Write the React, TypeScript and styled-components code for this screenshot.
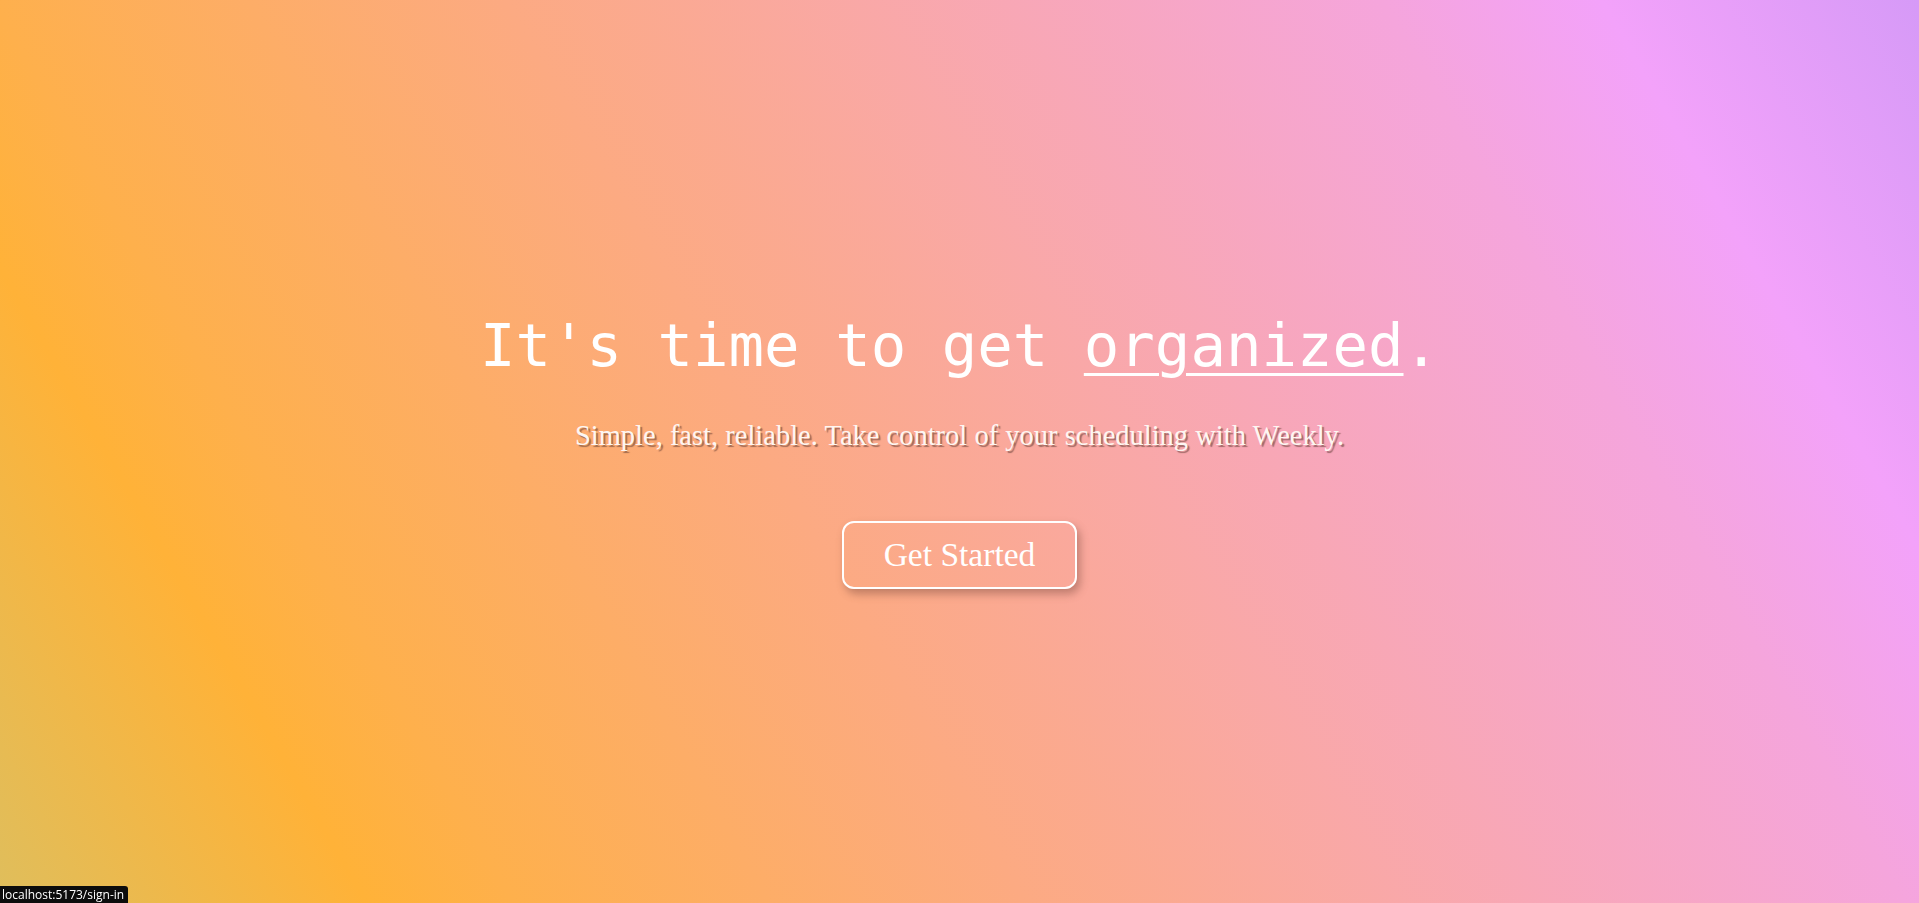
import React from "react";
import styled, { createGlobalStyle } from "styled-components";

const GlobalStyle = createGlobalStyle`
  html, body, #root {
    margin: 0;
    padding: 0;
    height: 100%;
  }
  body {
    overflow: hidden;
  }
`;

const Page = styled.main`
  width: 100vw;
  height: 100vh;
  box-sizing: border-box;
  padding-bottom: 3px;
  display: flex;
  flex-direction: column;
  align-items: center;
  justify-content: center;
  background: linear-gradient(
    60deg,
    #dfbe5c 0%,
    #ffb238 15%,
    #feb04c 21%,
    #fcaa82 42%,
    #f5a5dc 78%,
    #f3a2fa 87%,
    #d69af7 100%
  );
  color: #fff;
`;

const Title = styled.h1`
  margin: 0;
  font-family: "DejaVu Sans Mono", monospace;
  font-weight: 400;
  font-size: 59px;
  line-height: normal;
  white-space: nowrap;
`;

const Underlined = styled.span`
  text-decoration: underline;
  text-decoration-thickness: 3px;
  text-underline-offset: 7px;
`;

const Subtitle = styled.p`
  margin: 40px 0 0;
  font-family: "Liberation Serif", serif;
  font-size: 28.5px;
  line-height: normal;
  color: #fdf6f2;
  text-shadow: 2px 2px 1px rgba(90, 55, 45, 0.55);
`;

const StartButton = styled.button`
  margin-top: 69px;
  width: 235px;
  height: 68px;
  box-sizing: border-box;
  border: 2px solid #fff;
  border-radius: 12px;
  background: transparent;
  color: #fff;
  font-family: "Liberation Serif", serif;
  font-size: 33.5px;
  cursor: pointer;
  box-shadow: 3px 5px 8px rgba(120, 70, 60, 0.45);
`;

const StatusTip = styled.div`
  position: fixed;
  left: 0;
  bottom: 0;
  padding: 0 4px 0 2px;
  height: 17px;
  line-height: 17px;
  background: #0c0c0c;
  color: #fff;
  font-family: "Open Sans", "DejaVu Sans", sans-serif;
  font-size: 12px;
  border-top-right-radius: 3px;
`;

export default function App() {
  return (
    <>
      <GlobalStyle />
      <Page>
        <Title>
          It's time to get <Underlined>organized</Underlined>.
        </Title>
        <Subtitle>
          Simple, fast, reliable. Take control of your scheduling with Weekly.
        </Subtitle>
        <StartButton>Get Started</StartButton>
      </Page>
      <StatusTip>localhost:5173/sign-in</StatusTip>
    </>
  );
}
